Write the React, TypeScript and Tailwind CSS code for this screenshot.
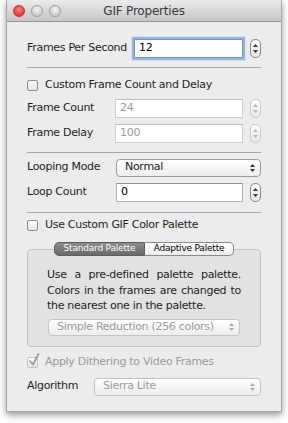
import React from "react";

const T = "text-[11px] tracking-[-0.3px]";

function Stepper({ disabled }: { disabled?: boolean }) {
  const c = disabled ? "#b8b8b8" : "#333";
  return (
    <div
      className={`ml-[7px] w-[11px] h-[19px] shrink-0 rounded-[5px] border ${
        disabled ? "border-[#cbcbcb]" : "border-[#8a8a8a]"
      } bg-gradient-to-b from-white to-[#e6e6e6] flex flex-col items-center justify-center gap-[3px]`}
    >
      <svg width="5" height="3" viewBox="0 0 5 3">
        <path d="M0 3L2.5 0L5 3Z" fill={c} />
      </svg>
      <svg width="5" height="3" viewBox="0 0 5 3">
        <path d="M0 0L2.5 3L5 0Z" fill={c} />
      </svg>
    </div>
  );
}

function Arrows({ disabled }: { disabled?: boolean }) {
  const c = disabled ? "#aaaaaa" : "#333";
  return (
    <div className="flex flex-col items-center gap-[2px]">
      <svg width="5" height="3" viewBox="0 0 5 3">
        <path d="M0 3L2.5 0L5 3Z" fill={c} />
      </svg>
      <svg width="5" height="3" viewBox="0 0 5 3">
        <path d="M0 0L2.5 3L5 0Z" fill={c} />
      </svg>
    </div>
  );
}

function Select({
  value,
  disabled,
  className,
}: {
  value: string;
  disabled?: boolean;
  className: string;
}) {
  return (
    <div
      className={`${className} rounded-[4px] border ${
        disabled ? "border-[#c4c4c4] text-[#9c9c9c]" : "border-[#9c9c9c] text-[#1a1a1a]"
      } bg-gradient-to-b from-white to-[#ededed] flex items-center justify-between pl-[8px] pr-[5px] ${T}`}
    >
      <span>{value}</span>
      <Arrows disabled={disabled} />
    </div>
  );
}

function Input({
  value,
  disabled,
  focused,
  className,
}: {
  value: string;
  disabled?: boolean;
  focused?: boolean;
  className: string;
}) {
  return (
    <div
      className={`${className} h-[19px] bg-white border flex items-center pl-[4px] ${T} ${
        focused
          ? "border-[#6f98d0] shadow-[0_0_1px_2px_rgba(110,160,225,0.7)] text-black"
          : disabled
          ? "border-[#cfcfcf] border-t-[#bdbdbd] text-[#9a9a9a]"
          : "border-[#b5b5b5] border-t-[#8f8f8f] text-black"
      }`}
    >
      {value}
    </div>
  );
}

function Checkbox({ checked, disabled }: { checked?: boolean; disabled?: boolean }) {
  return (
    <div className="relative w-[12px] h-[12px] shrink-0">
      <div
        className={`w-[11px] h-[11px] mt-[1px] rounded-[2px] border ${
          disabled ? "border-[#c2c2c2]" : "border-[#8c8c8c]"
        } bg-gradient-to-b from-white to-[#e4e4e4]`}
      />
      {checked && (
        <svg
          className="absolute left-[1px] top-[-3px]"
          width="12"
          height="13"
          viewBox="0 0 12 13"
        >
          <path
            d="M2 8 L5 11.5 L10.5 1"
            fill="none"
            stroke="#999"
            strokeWidth="1.8"
            strokeLinecap="round"
            strokeLinejoin="round"
          />
        </svg>
      )}
    </div>
  );
}

function Sep() {
  return <div className="h-px bg-[#a5a5a5]" />;
}

export default function App() {
  return (
    <div className="w-[288px] h-[423px] bg-white font-['DejaVu_Sans',sans-serif] overflow-hidden">
      <div className="ml-[6px] w-[276px] h-[412px] bg-[#ececec] border-x border-b border-[#a8a8a8] shadow-[0_3px_7px_rgba(0,0,0,0.4)] flex flex-col">
        {/* Title bar */}
        <div className="relative h-[22px] shrink-0 bg-gradient-to-b from-[#ebebeb] to-[#c6c6c6] border-b border-[#979797] flex items-center">
          <div className="flex items-center gap-[6px] pl-[6px]">
            <div className="w-[12px] h-[12px] rounded-full bg-[radial-gradient(circle_at_50%_35%,#ff8a80,#e0392f_70%)] border border-[#b5352c]" />
            <div className="w-[12px] h-[12px] rounded-full bg-[radial-gradient(circle_at_50%_35%,#f4f4f4,#cfcfcf_70%)] border border-[#9f9f9f]" />
            <div className="w-[12px] h-[12px] rounded-full bg-[radial-gradient(circle_at_50%_35%,#f4f4f4,#cfcfcf_70%)] border border-[#9f9f9f]" />
          </div>
          <div className="absolute inset-0 flex items-center justify-center text-[12px] tracking-[-0.2px] text-[#3a3a3a]">
            GIF Properties
          </div>
        </div>

        {/* Content */}
        <div className="px-[20px] pt-[16px] flex flex-col text-[#1e1e1e]">
          <div className="flex items-center h-[20px]">
            <div className={`w-[107px] shrink-0 ${T}`}>Frames Per Second</div>
            <Input value="12" focused className="w-[109px]" />
            <Stepper />
          </div>

          <div className="mt-[9px]">
            <Sep />
          </div>

          <div className={`mt-[9px] h-[16px] flex items-center gap-[6px] ${T}`}>
            <Checkbox />
            <span>Custom Frame Count and Delay</span>
          </div>

          <div className="mt-[6px] flex items-center h-[19px]">
            <div className={`w-[88px] shrink-0 ${T}`}>Frame Count</div>
            <Input value="24" disabled className="w-[128px]" />
            <Stepper disabled />
          </div>
          <div className="mt-[6px] flex items-center h-[19px]">
            <div className={`w-[88px] shrink-0 ${T}`}>Frame Delay</div>
            <Input value="100" disabled className="w-[128px]" />
            <Stepper disabled />
          </div>

          <div className="mt-[9px]">
            <Sep />
          </div>

          <div className="mt-[5px] flex items-center h-[19px]">
            <div className={`w-[89px] shrink-0 ${T}`}>Looping Mode</div>
            <Select value="Normal" className="flex-1 h-[18px]" />
          </div>
          <div className="mt-[6px] flex items-center h-[19px]">
            <div className={`w-[89px] shrink-0 ${T}`}>Loop Count</div>
            <Input value="0" className="w-[127px]" />
            <Stepper />
          </div>

          <div className="mt-[10px]">
            <Sep />
          </div>

          <div className={`mt-[4px] h-[16px] flex items-center gap-[6px] ${T}`}>
            <Checkbox />
            <span>Use Custom GIF Color Palette</span>
          </div>

          {/* Tabs + box */}
          <div className="mt-[9px] relative z-10 flex justify-center">
            <div className="flex h-[14px] text-[9px] tracking-[-0.2px]">
              <div className="w-[91px] rounded-l-[5px] border border-[#5f5f5f] bg-gradient-to-b from-[#8c8c8c] to-[#6a6a6a] text-white flex items-center justify-center">
                Standard Palette
              </div>
              <div className="w-[89px] rounded-r-[5px] border border-l-0 border-[#8a8a8a] bg-gradient-to-b from-white to-[#ececec] text-black flex items-center justify-center">
                Adaptive Palette
              </div>
            </div>
          </div>
          <div className="-mt-[7px] h-[98px] rounded-[4px] border border-[#c4c4c4] bg-[#e2e2e2] pt-[17px] px-[19px] flex flex-col">
            <div className={`${T} leading-[15.5px] text-[#1e1e1e]`}>
              <div className="text-justify [text-align-last:justify] whitespace-nowrap">
                Use a pre-defined palette palette.
              </div>
              <div className="text-justify [text-align-last:justify] whitespace-nowrap">
                Colors in the frames are changed to
              </div>
              <div className="whitespace-nowrap">the nearest one in the palette.</div>
            </div>
            <Select
              value="Simple Reduction (256 colors)"
              disabled
              className="mt-[5px] mx-[1px] h-[17px]"
            />
          </div>

          <div className={`mt-[7px] h-[16px] flex items-center gap-[6px] ${T} text-[#9a9a9a]`}>
            <Checkbox checked disabled />
            <span>Apply Dithering to Video Frames</span>
          </div>

          <div className="mt-[7px] flex items-center h-[19px]">
            <div className={`w-[67px] shrink-0 ${T}`}>Algorithm</div>
            <Select value="Sierra Lite" disabled className="flex-1 h-[18px]" />
          </div>
        </div>
      </div>
    </div>
  );
}
